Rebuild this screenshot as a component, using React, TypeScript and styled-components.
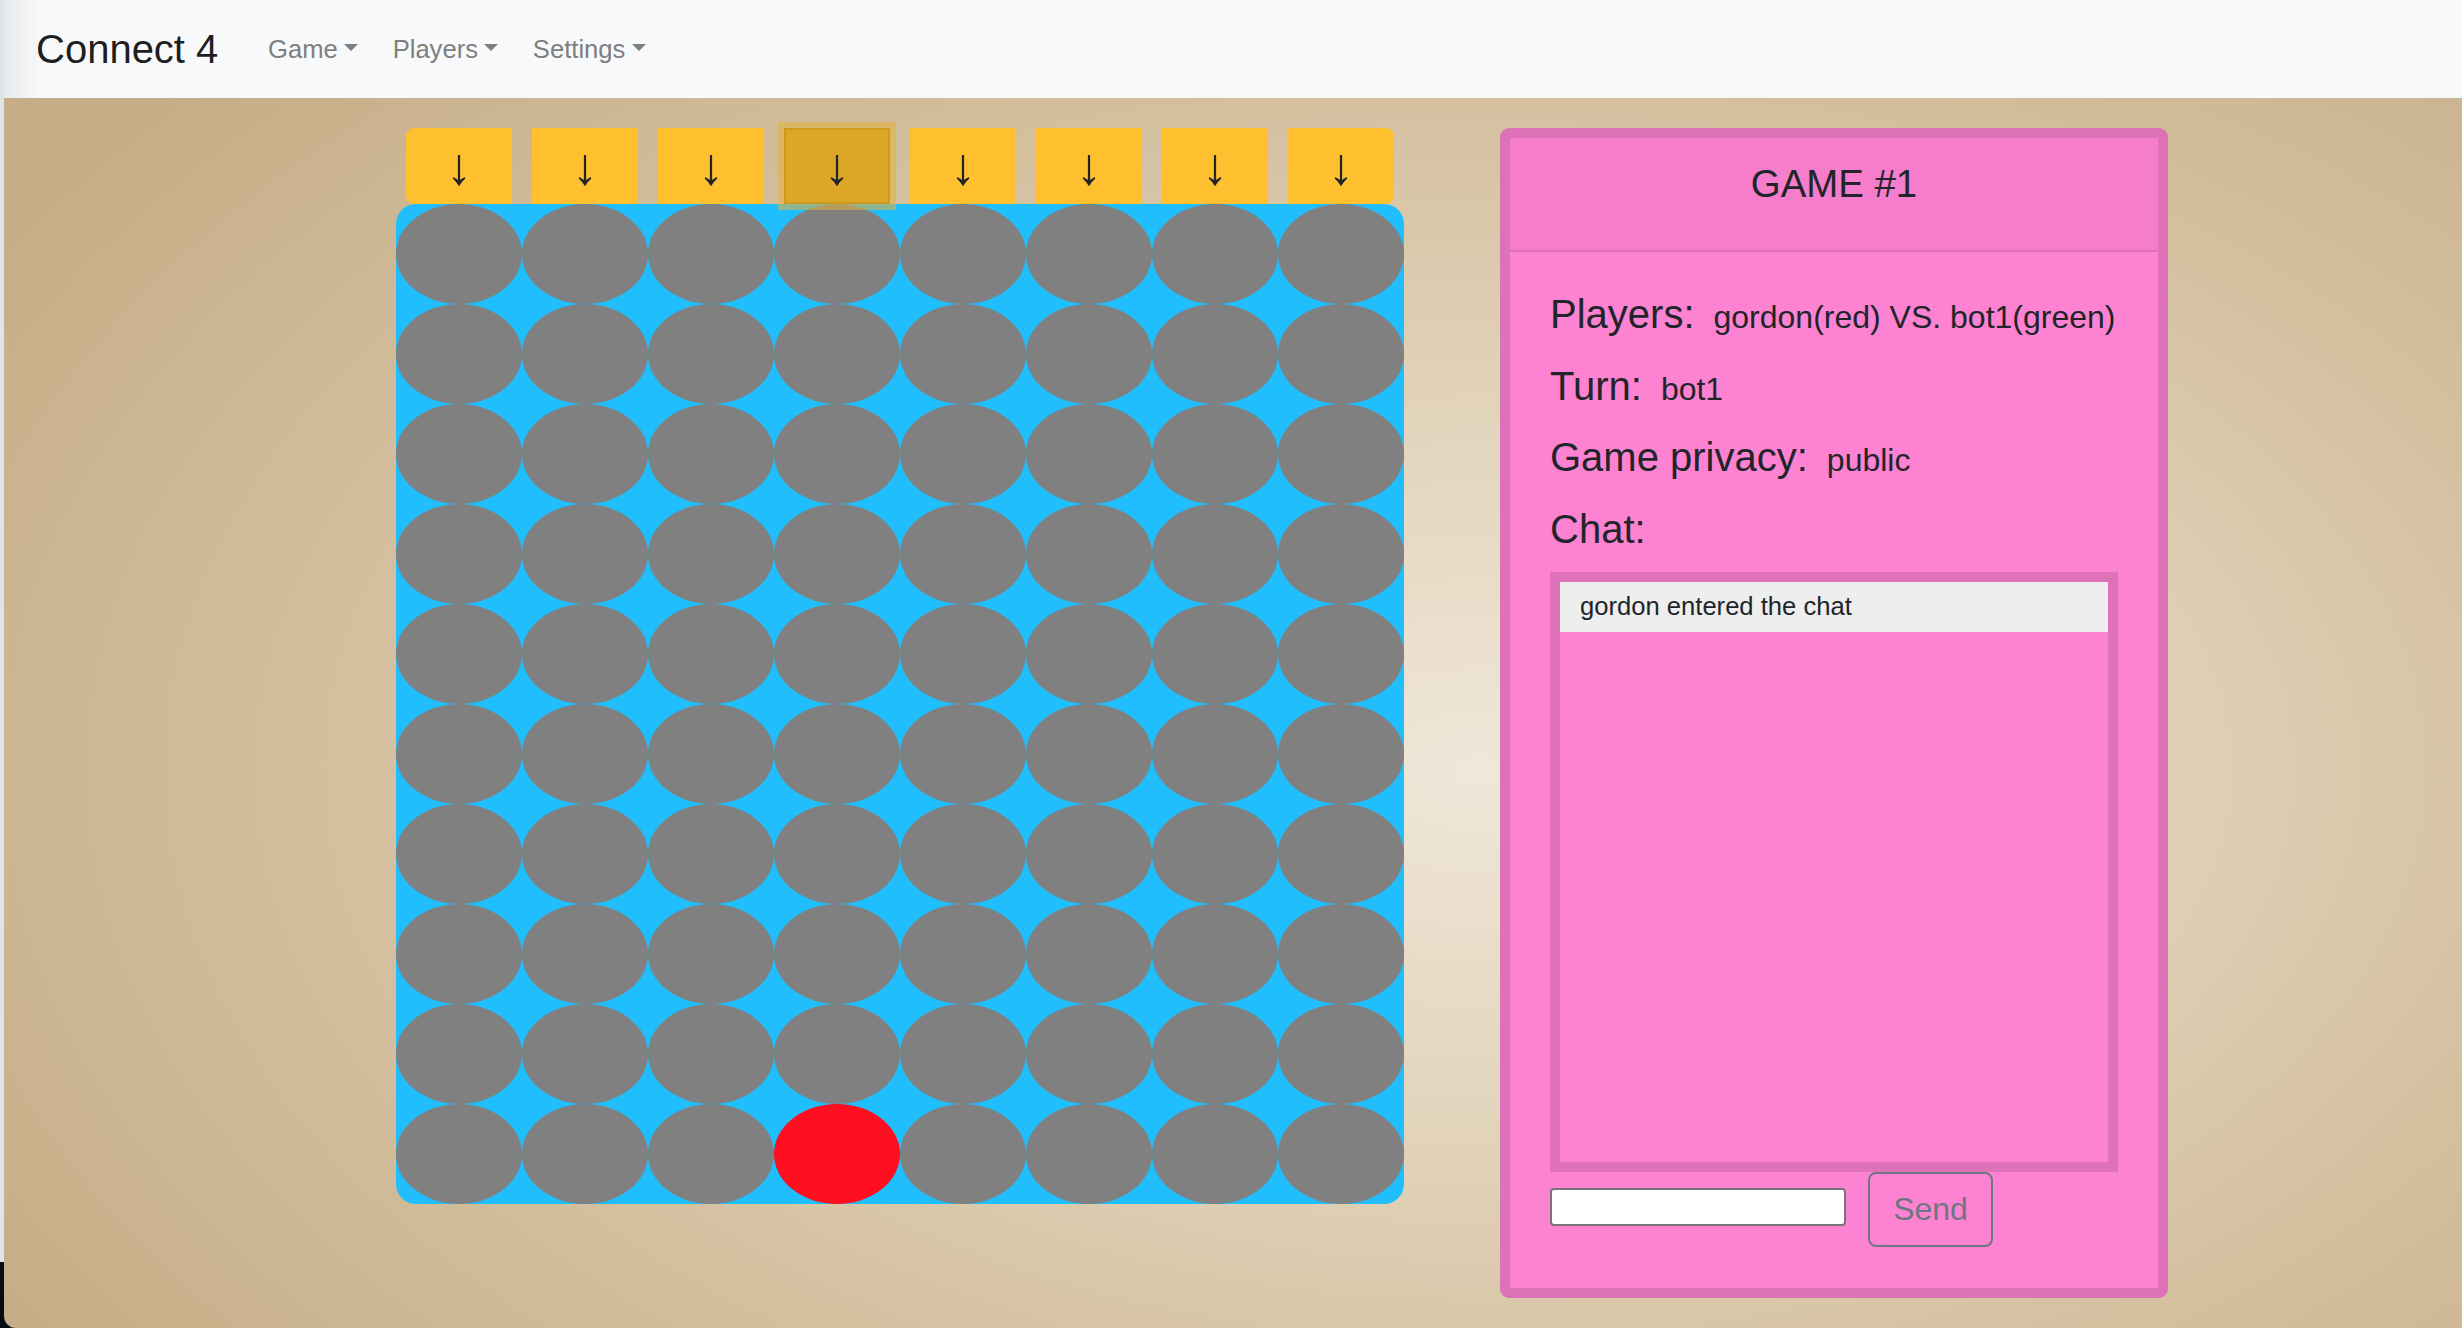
import React from "react";
import styled, { createGlobalStyle, css } from "styled-components";

const GlobalStyle = createGlobalStyle`
  html, body {
    margin: 0;
    padding: 0;
  }
  body {
    font-family: "Liberation Sans", Arial, Helvetica, sans-serif;
    color: #212529;
  }
  * {
    box-sizing: border-box;
  }
`;

const Shell = styled.div`
  width: 2462px;
  height: 1328px;
  overflow: hidden;
  padding-left: 4px;
  background: linear-gradient(to bottom, #dfe4e7 0, #dfe4e7 1262px, #070b14 1262px);
`;

const Page = styled.div`
  height: 100%;
  display: flex;
  flex-direction: column;
  border-bottom-left-radius: 12px;
  overflow: hidden;
  background: radial-gradient(
    ellipse 70% 78% at 60% 58%,
    #f0e7d9 0%,
    #e4d6bf 30%,
    #d4c09f 65%,
    #c6ad87 100%
  );
`;

const Navbar = styled.nav`
  height: 98px;
  flex: none;
  display: flex;
  align-items: center;
  padding: 0 32px;
  background: linear-gradient(to right, #e8ebed 0, #f8f9fa 40px);
`;

const Brand = styled.a`
  font-size: 40px;
  color: rgba(0, 0, 0, 0.9);
  text-decoration: none;
  margin-right: 32.5px;
`;

const NavLink = styled.a`
  font-size: 25.6px;
  color: #7e7f80;
  padding: 0 17.2px;
  text-decoration: none;
  white-space: nowrap;
`;

const Caret = styled.span`
  display: inline-block;
  margin-left: 0.255em;
  vertical-align: 0.255em;
  border-top: 0.3em solid currentColor;
  border-left: 0.3em solid transparent;
  border-right: 0.3em solid transparent;
  border-bottom: 0;
`;

const Main = styled.main`
  display: flex;
  align-items: flex-start;
  gap: 96px;
  padding: 30px 0 0 392px;
`;

const BoardColumn = styled.section`
  display: flex;
  flex-direction: column;
  width: 1008px;
`;

const DropRow = styled.div`
  display: flex;
`;

const DropCell = styled.div`
  width: 126px;
  padding: 0 10px;
`;

type Pos = "first" | "mid" | "last";

const DropButton = styled.button<{ $pos: Pos; $active?: boolean }>`
  position: relative;
  display: flex;
  align-items: center;
  justify-content: center;
  width: 106px;
  height: 76px;
  padding: 0;
  font-family: "Liberation Sans", Arial, sans-serif;
  font-size: 52px;
  line-height: 1;
  color: #212529;
  background: #fec02f;
  border: 1px solid #fec02f;
  border-radius: ${(p) =>
    p.$pos === "first" ? "8px 0 0 8px" : p.$pos === "last" ? "0 8px 8px 0" : "0"};
  cursor: pointer;
  ${(p) =>
    p.$active &&
    css`
      z-index: 1;
      background: #dca626;
      border: 2px solid #cf9a1c;
      border-radius: 0;
      box-shadow: 0 0 0 6px rgba(226, 178, 62, 0.57);
    `}
`;

const Board = styled.div`
  display: grid;
  grid-template-columns: repeat(8, 126px);
  grid-auto-rows: 100px;
  width: 1008px;
  background: #20befc;
  border-radius: 20px;
  overflow: hidden;
`;

const Hole = styled.div<{ $color: string }>`
  background: ${(p) => p.$color};
  border-radius: 50%;
`;

const Panel = styled.section`
  width: 668px;
  display: flex;
  flex-direction: column;
  background: #fe82d2;
  border: 10px solid #de72b8;
  border-radius: 9px;
`;

const PanelHeader = styled.h4`
  margin: 0;
  padding: 23px 0 43px;
  font-size: 38.4px;
  line-height: 1.2;
  font-weight: 400;
  text-align: center;
  background: rgba(0, 0, 0, 0.03);
  border-bottom: 2px solid #de72b8;
`;

const PanelBody = styled.div`
  display: flex;
  flex-direction: column;
  padding: 38px 40px 41px;
`;

const InfoRow = styled.div<{ $gap?: number }>`
  height: 48px;
  font-size: 40px;
  line-height: 48px;
  margin-bottom: ${(p) => p.$gap ?? 23.5}px;
  white-space: nowrap;
`;

const InfoValue = styled.span`
  font-size: 32px;
  line-height: 1;
  margin-left: 19px;
`;

const ChatBox = styled.div`
  height: 600px;
  display: flex;
  flex-direction: column;
  border: 10px solid #de72b8;
`;

const ChatMessage = styled.div`
  height: 50px;
  display: flex;
  align-items: center;
  padding: 0 20px;
  font-size: 25.6px;
  background: #eeeeee;
`;

const InputRow = styled.div`
  display: flex;
  align-items: flex-start;
  gap: 22px;
`;

const ChatInput = styled.input`
  width: 296px;
  height: 38px;
  margin-top: 16px;
  border: 2px solid #767676;
  border-radius: 4px;
  background: #ffffff;
  font-size: 24px;
  padding: 0 6px;
`;

const SendButton = styled.button`
  width: 125px;
  height: 75px;
  border: 2px solid #6f7680;
  border-radius: 8px;
  background: transparent;
  color: #6f7680;
  font-family: "Liberation Sans", Arial, sans-serif;
  font-size: 32px;
  cursor: pointer;
`;

const COLS = 8;
const ROWS = 10;

export default function App() {
  const cells: { key: string; color: string }[] = [];
  for (let r = 0; r < ROWS; r++) {
    for (let c = 0; c < COLS; c++) {
      const red = r === ROWS - 1 && c === 3;
      cells.push({ key: `${r}-${c}`, color: red ? "#fe0e1f" : "#808080" });
    }
  }

  return (
    <>
      <GlobalStyle />
      <Shell>
        <Page>
          <Navbar>
            <Brand>Connect 4</Brand>
            <NavLink>
              Game
              <Caret />
            </NavLink>
            <NavLink>
              Players
              <Caret />
            </NavLink>
            <NavLink>
              Settings
              <Caret />
            </NavLink>
          </Navbar>
          <Main>
            <BoardColumn>
              <DropRow>
                {Array.from({ length: COLS }).map((_, i) => (
                  <DropCell key={i}>
                    <DropButton
                      $pos={i === 0 ? "first" : i === COLS - 1 ? "last" : "mid"}
                      $active={i === 3}
                    >
                      ↓
                    </DropButton>
                  </DropCell>
                ))}
              </DropRow>
              <Board>
                {cells.map((cell) => (
                  <Hole key={cell.key} $color={cell.color} />
                ))}
              </Board>
            </BoardColumn>
            <Panel>
              <PanelHeader>GAME #1</PanelHeader>
              <PanelBody>
                <InfoRow>
                  Players:<InfoValue>gordon(red) VS. bot1(green)</InfoValue>
                </InfoRow>
                <InfoRow>
                  Turn:<InfoValue>bot1</InfoValue>
                </InfoRow>
                <InfoRow>
                  Game privacy:<InfoValue>public</InfoValue>
                </InfoRow>
                <InfoRow $gap={19}>Chat:</InfoRow>
                <ChatBox>
                  <ChatMessage>gordon entered the chat</ChatMessage>
                </ChatBox>
                <InputRow>
                  <ChatInput type="text" />
                  <SendButton>Send</SendButton>
                </InputRow>
              </PanelBody>
            </Panel>
          </Main>
        </Page>
      </Shell>
    </>
  );
}
